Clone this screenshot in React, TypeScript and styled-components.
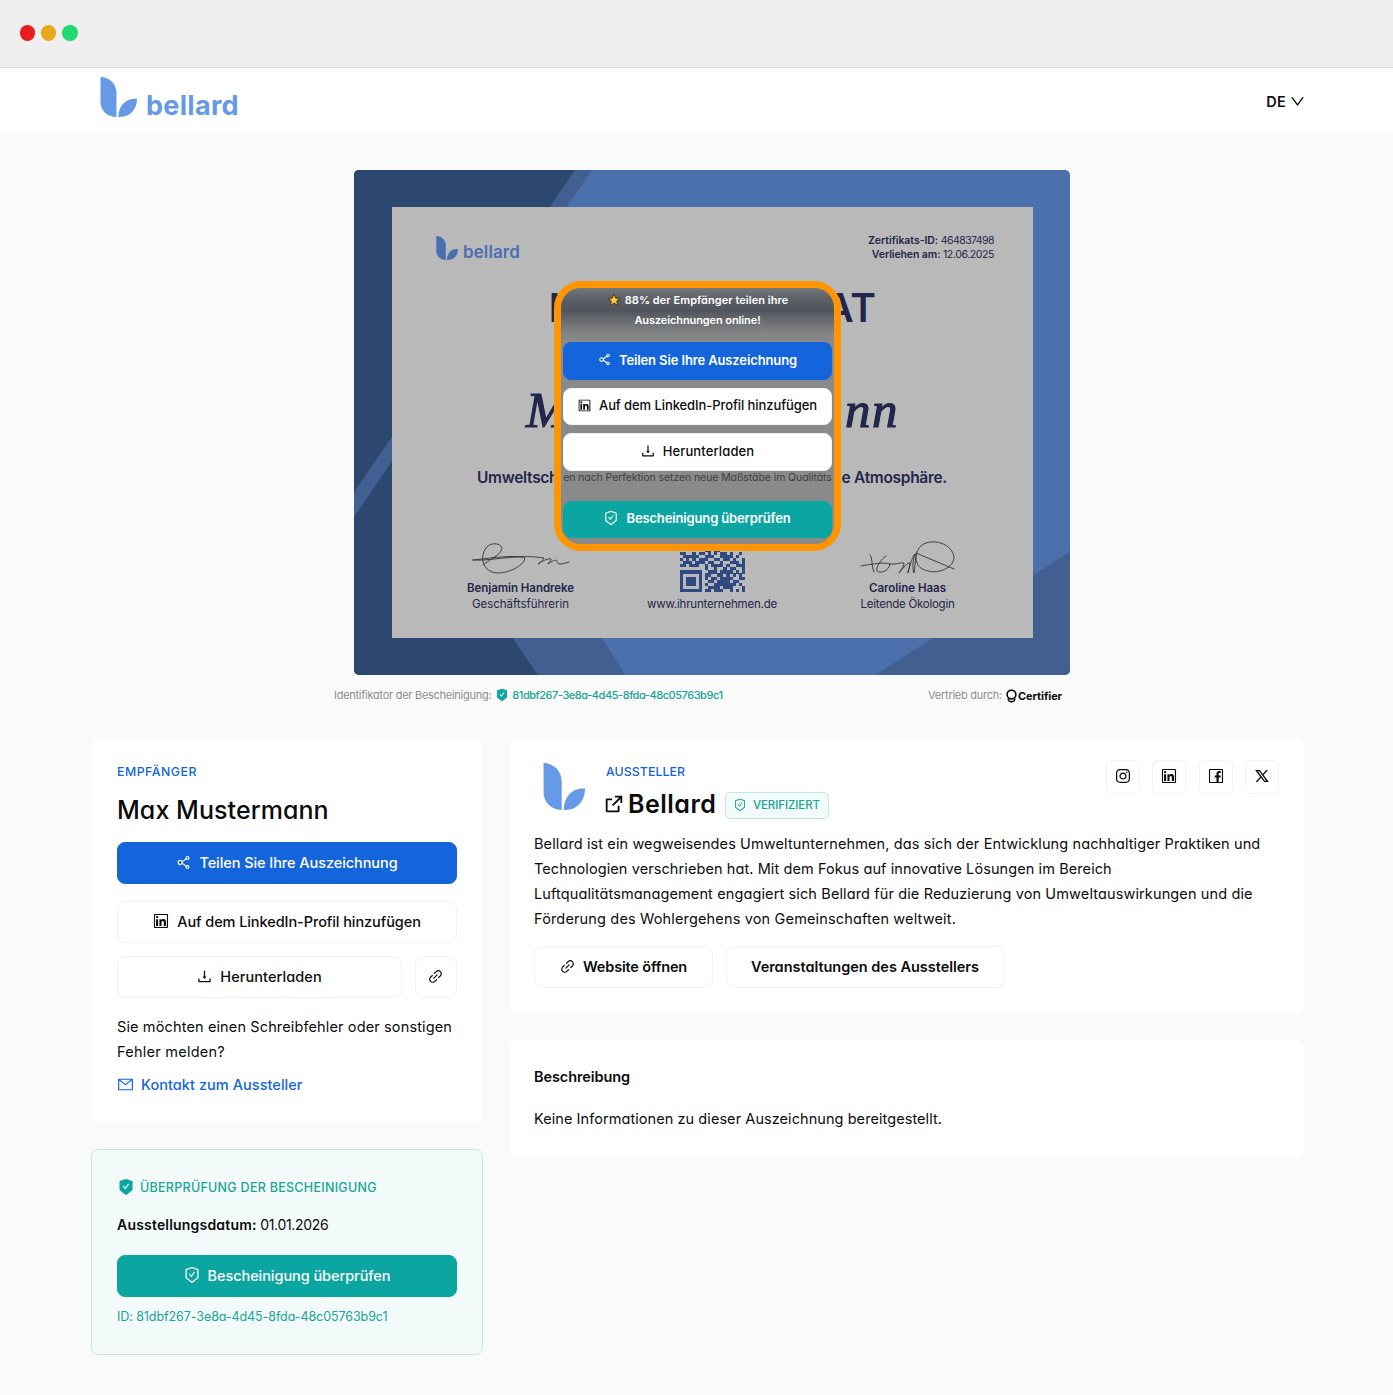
import React from "react";
import styled, { createGlobalStyle, css } from "styled-components";
import {
  AiFillSafetyCertificate,
  AiOutlineDown,
  AiOutlineDownload,
  AiOutlineFacebook,
  AiOutlineInstagram,
  AiOutlineLink,
  AiOutlineLinkedin,
  AiOutlineMail,
  AiOutlineSafetyCertificate,
  AiOutlineShareAlt,
} from "react-icons/ai";
import { RiExternalLinkLine, RiTwitterXLine } from "react-icons/ri";

const BLUE = "#1465dc";
const TEAL = "#0ba5a2";
const TEAL_TEXT = "#18a594";
const LEAF = "#6699e6";
const NAVY = "#23264a";

const GlobalStyle = createGlobalStyle`
  *, *::before, *::after { box-sizing: border-box; }
  body {
    margin: 0;
    background: #fafafa;
    color: #0c0c0d;
    font-family: Inter, "Liberation Sans", sans-serif;
    font-feature-settings: "cv11";
  }
  h1, h2, h3, p { margin: 0; font-weight: inherit; font-size: inherit; }
  svg { display: block; flex: none; }
`;

interface TextProps {
  $size?: number;
  $weight?: number;
  $ls?: number;
  $color?: string;
}

const Text = styled.span<TextProps>`
  font-size: ${(p) => p.$size ?? 14.5}px;
  font-weight: ${(p) => p.$weight ?? 400};
  letter-spacing: ${(p) => p.$ls ?? 0}px;
  color: ${(p) => p.$color ?? "inherit"};
  white-space: nowrap;
`;

/* ---------- window and page header ---------- */

const Page = styled.div`
  height: 1395px;
  overflow: hidden;
`;

const WindowBar = styled.div`
  display: flex;
  align-items: center;
  gap: 5.8px;
  height: 68px;
  padding: 0 0 1px 19.5px;
  background: #efefef;
  border-bottom: 1px solid #dcdcdc;
`;

const Dot = styled.i<{ $color: string }>`
  width: 15.5px;
  height: 15.5px;
  border-radius: 50%;
  background: ${(p) => p.$color};
`;

const Header = styled.header`
  display: flex;
  justify-content: space-between;
  height: 66px;
  padding: 9px 87px 0 100px;
  background: #fff;
`;

const Brand = styled.div<{ $scale?: "small" }>`
  display: flex;
  align-items: flex-start;
  font-feature-settings: normal;
  ${(p) =>
    p.$scale === "small"
      ? css`
          color: #4a6fb0;
          gap: 5px;
          & > span { margin-top: 6px; line-height: 20px; }
        `
      : css`
          color: ${LEAF};
          gap: 9px;
          & > span { margin-top: 13px; line-height: 32px; }
        `}
`;

const Language = styled.button`
  display: flex;
  align-items: center;
  gap: 3px;
  height: 48px;
  padding: 0;
  border: 0;
  background: none;
  font-family: inherit;
  font-feature-settings: inherit;
  color: #111;
`;

/* ---------- certificate ---------- */

const Certificate = styled.section`
  position: relative;
  width: 716px;
  height: 505px;
  margin: 36px 0 0 354px;
  padding: 37px 37px 37px 38px;
  border-radius: 5px;
  overflow: hidden;
  background: #4b70ab;
`;

const Backdrop = styled.svg`
  position: absolute;
  inset: 0;
`;

const Sheet = styled.div`
  position: relative;
  height: 431px;
  background: #b9b9b9;
  color: ${NAVY};
  font-feature-settings: normal;
`;

const SheetTop = styled.div`
  display: flex;
  justify-content: space-between;
  height: 78px;
  padding: 29px 39px 0 44px;
`;

const Facts = styled.div`
  display: flex;
  flex-direction: column;
  align-items: flex-end;
  font-size: 10.5px;
  line-height: 14px;
  margin-top: -2px;
`;

const SplitLine = styled.div<{ $height: number; $left: number; $right: number; $top?: number }>`
  display: flex;
  align-items: center;
  justify-content: space-between;
  height: ${(p) => p.$height}px;
  margin-top: ${(p) => p.$top ?? 0}px;
  padding: 0 ${(p) => p.$right}px 0 ${(p) => p.$left}px;
`;

const Script = styled.span`
  font: italic 51px/60px "Liberation Serif", serif;
  letter-spacing: 1.5px;
  -webkit-text-stroke: 1.2px currentColor;
`;

const Signers = styled.div`
  display: grid;
  grid-template-columns: 257px 126px 265px;
  height: 92px;
  margin-top: 28px;
`;

const Signer = styled.div`
  display: flex;
  flex-direction: column;
  align-items: center;
  justify-content: flex-end;
  line-height: 16px;
  & > svg { margin-bottom: 4px; }
`;

/* ---------- highlighted action menu ---------- */

const Spotlight = styled.div`
  position: absolute;
  left: 200px;
  top: 111px;
  width: 287px;
  height: 270px;
  border: 7.5px solid #ff9503;
  border-radius: 27px;
  background: #8a8a8a;
  overflow: hidden;
`;

const Hint = styled.div`
  display: flex;
  flex-direction: column;
  align-items: center;
  height: 54px;
  padding-top: 1.5px;
  line-height: 20.5px;
  color: #fff;
  background: linear-gradient(#74777b 0, #5b5f66 12px, #50545c 22px, #6b6d71 34px, #828385 44px, #8a8a8a 54px);
`;

const HintLine = styled.div`
  display: flex;
  align-items: center;
  gap: 4px;
`;

const MenuButtons = styled.div`
  display: grid;
  gap: 8px;
  padding: 0 2px;
`;

const FaintLine = styled.div`
  position: relative;
  height: 12px;
  margin: 1px 0 17px;
  display: flex;
  justify-content: center;
  line-height: 12px;
  color: #3d3e43;
  &::after {
    content: "";
    position: absolute;
    inset: auto 0 0;
    height: 3px;
    background: #8a8a8a;
  }
`;

/* ---------- buttons ---------- */

type Tone = "blue" | "teal" | "plain";

const Button = styled.button<{ $tone: Tone; $height?: number; $grow?: boolean; $width?: number; $gap?: number }>`
  display: flex;
  align-items: center;
  justify-content: center;
  gap: ${(p) => p.$gap ?? 7}px;
  height: ${(p) => p.$height ?? 42}px;
  ${(p) => p.$width && `width: ${p.$width}px;`}
  ${(p) => p.$grow && "flex: 1;"}
  padding: 0 1px 2px 0;
  border-radius: 8px;
  border: 1px solid ${(p) => (p.$tone === "plain" ? "#f2f2f2" : p.$tone === "blue" ? BLUE : TEAL)};
  background: ${(p) => (p.$tone === "blue" ? BLUE : p.$tone === "teal" ? TEAL : "#fff")};
  color: ${(p) => (p.$tone === "plain" ? "#0c0c0d" : "#fff")};
  font-family: inherit;
  font-feature-settings: "cv11";
`;

/* ---------- caption row ---------- */

const Caption = styled.div`
  display: flex;
  justify-content: space-between;
  align-items: center;
  height: 20px;
  margin: 10px 331px 0 334px;
  color: #8d8f92;
`;

const Inline = styled.div<{ $gap: number; $top?: number }>`
  display: flex;
  align-items: center;
  gap: ${(p) => p.$gap}px;
  margin-top: ${(p) => p.$top ?? 0}px;
`;

/* ---------- cards ---------- */

const Columns = styled.main`
  display: grid;
  grid-template-columns: 390px 794px;
  column-gap: 28px;
  align-items: start;
  padding: 33px 0 0 92px;
`;

const Stack = styled.div`
  display: grid;
  grid-template-columns: 100%;
  gap: 27px;
`;

const Card = styled.section<{ $height: number; $padding: string }>`
  height: ${(p) => p.$height}px;
  padding: ${(p) => p.$padding};
  background: #fff;
  border-radius: 7px;
`;

const VerifyCard = styled(Card)`
  margin: 0 0 0 -1px;
  width: 392px;
  border: 1px solid #c9e4e0;
  background: #f3fafa;
`;

const Line = styled.div<{ $h: number; $top?: number }>`
  display: flex;
  align-items: center;
  height: ${(p) => p.$h}px;
  margin-top: ${(p) => p.$top ?? 0}px;
`;

const ButtonRow = styled.div<{ $top: number; $gap?: number }>`
  display: flex;
  gap: ${(p) => p.$gap ?? 13}px;
  margin-top: ${(p) => p.$top}px;
`;

const IssuerHead = styled.div`
  display: flex;
  align-items: flex-start;
  height: 68px;
`;

const IssuerLogo = styled.div`
  padding: 1px 0 0 9px;
`;

const IssuerTitle = styled.div`
  flex: 1;
  margin-left: 21px;
`;

const IssuerName = styled(Line)`
  & > svg { margin: 0 3px 0 -3px; }
`;

const Socials = styled.div`
  display: flex;
  gap: 12.4px;
  margin-top: -2px;
`;

const SocialButton = styled.a`
  display: grid;
  place-items: center;
  width: 34px;
  height: 34px;
  padding-bottom: 3px;
  border: 1px solid #f3f3f3;
  border-radius: 6px;
`;

const Badge = styled.span`
  display: flex;
  align-items: center;
  justify-content: center;
  gap: 6px;
  width: 104px;
  height: 27px;
  margin: 3px 0 0 9px;
  padding: 0 2px 1px 0;
  border: 1px solid #c4e7e2;
  border-radius: 5px;
  background: #f3fafa;
  color: ${TEAL_TEXT};
`;

/* ---------- drawings ---------- */

const Leaf = ({ width, height, color = LEAF }: { width: number; height: number; color?: string }) => (
  <svg width={width} height={height} viewBox="0 0 36 40" preserveAspectRatio="none" fill={color}>
    <path d="M0.5 0C9 0 16 7 16 15.500V40C7 40 0.500 33.500 0.500 25Z" />
    <path d="M17.800 40C17.800 29.500 24.500 21.800 34 21.800H36C36 32 29.500 40 19.500 40Z" />
  </svg>
);

const Star = () => (
  <svg width="14" height="14" viewBox="0 0 24 24">
    <path
      d="M12 1.800l3 7h7.500l-6 5 2.200 7.700L12 17.200l-6.700 4.300 2.200-7.700-6-5H9z"
      fill="#ffc83d"
      stroke="#3d3222"
      strokeWidth="1.500"
      strokeLinejoin="round"
    />
  </svg>
);

const Seal = () => (
  <svg width="11" height="14" viewBox="0 0 11 14" fill="none" stroke="#0b0b0b" strokeWidth="1.600">
    <circle cx="5.500" cy="5.500" r="4.400" />
    <path d="M1.800 9.500L3 12L5.500 13L8 12L9.200 9.500" strokeWidth="1.400" />
  </svg>
);

const QR = [
  "111111100101101111111",
  "100000101100101000001",
  "101110100011001011101",
  "101110101101001011101",
  "101110100100101011101",
  "100000101101101000001",
  "111111101010101111111",
  "000000001101100000000",
  "110010110101011010010",
  "011111001110011110100",
  "101010111001101101001",
  "011101110110010011101",
  "110111001011110100111",
  "000000001001001011001",
  "111111100111011110101",
  "100000101100110101010",
  "101110101011011110011",
  "101110100110111101100",
  "101110101001111111010",
  "100000100111101110001",
  "111111101101110010101",
];

const QrCode = () => (
  <svg width="65" height="65" viewBox="0 0 21 21" fill="#2f4a83" shapeRendering="crispEdges">
    {QR.flatMap((row, y) =>
      [...row].map((cell, x) => (cell === "1" ? <rect key={`${x}-${y}`} x={x} y={y} width="1.030" height="1.030" /> : null)),
    )}
  </svg>
);

const SignatureLeft = () => (
  <svg width="98" height="34" viewBox="0 0 98 34" fill="none" stroke="#30323c" strokeWidth="0.900" strokeLinecap="round">
    <path d="M1 18C12 17 36 13 52 15C56 20 40 31 26 31C16 31 9 23 11 13C13 3 20 1 25 2C33 4 30 10 24 14C18 18 12 22 11 23" />
    <path d="M1 18C16 19 30 15 49 15C58 14 64 15 72 16C70 20 66 22 66 22C72 18 77 16 79 17C80 18 75 22 76 22C80 19 84 17 85 19C85 21 86 22 88 22C91 22 94 21 97 20" />
  </svg>
);

const SignatureRight = () => (
  <svg width="96" height="36" viewBox="0 0 96 36" fill="none" stroke="#30323c" strokeWidth="0.900" strokeLinecap="round">
    <path d="M1 26C12 24 24 22 30 24C29 31 20 34 17 31C15 28 22 18 26 16M10 15C13 18 11 26 14 32M30 24C36 25 40 22 44 23C44 27 39 32 39 33C44 27 48 22 50 23C50 27 47 33 48 33C50 25 53 15 55 14C53 20 52 28 54 33C56 22 54 11 62 5C72 -2 92 3 94 17C94 28 78 34 68 31C59 29 55 24 56 13L94 29" />
  </svg>
);

const CertificateBackdrop = () => (
  <Backdrop width="716" height="505" viewBox="0 0 716 505">
    <path d="M0 0H238L0 347Z" fill="#415f90" />
    <path d="M0 0H221L0 322Z" fill="#2d486e" />
    <path d="M0 347L100 200L160 469L184 505H0Z" fill="#2d486e" />
    <path d="M150 455H240L271 505H184Z" fill="#415f90" />
    <path d="M521 505L716 382V505Z" fill="#415f90" />
  </Backdrop>
);

/* ---------- page ---------- */

const ID = "81dbf267-3e8a-4d45-8fda-48c05763b9c1";

const bodyLines: [string, number][] = [
  ["Bellard ist ein wegweisendes Umweltunternehmen, das sich der Entwicklung nachhaltiger Praktiken und", 0.112],
  ["Technologien verschrieben hat. Mit dem Fokus auf innovative Lösungen im Bereich", 0.09],
  ["Luftqualitätsmanagement engagiert sich Bellard für die Reduzierung von Umweltauswirkungen und die", 0.122],
  ["Förderung des Wohlergehens von Gemeinschaften weltweit.", 0.155],
];

const socials = [AiOutlineInstagram, AiOutlineLinkedin, AiOutlineFacebook, RiTwitterXLine];

export default function App() {
  return (
    <Page>
      <GlobalStyle />
      <WindowBar>
        <Dot $color="#e81c1e" />
        <Dot $color="#e7a91b" />
        <Dot $color="#22db70" />
      </WindowBar>
      <Header>
        <Brand>
          <Leaf width={37} height={40} />
          <Text $size={27} $weight={700} $ls={0.3}>bellard</Text>
        </Brand>
        <Language>
          <Text $weight={600} $ls={0.3}>DE</Text>
          <AiOutlineDown size={17} />
        </Language>
      </Header>

      <Certificate>
        <CertificateBackdrop />
        <Sheet>
          <SheetTop>
            <Brand $scale="small">
              <Leaf width={22} height={24} color="#4a6fb0" />
              <Text $size={17} $weight={600} $ls={0.1}>bellard</Text>
            </Brand>
            <Facts>
              <div>
                <Text $size={10.5} $weight={600} $ls={-0.05}>Zertifikats-ID: </Text>
                <Text $size={10.5} $ls={-0.55}>464837498</Text>
              </div>
              <div>
                <Text $size={10.5} $weight={600} $ls={-0.1}>Verliehen am: </Text>
                <Text $size={10.5} $ls={-0.4}>12.06.2025</Text>
              </div>
            </Facts>
          </SheetTop>
          <SplitLine $height={44} $left={157} $right={157}>
            <Text $size={39} $weight={700}>I</Text>
            <Text $size={39} $weight={600}>AT</Text>
          </SplitLine>
          <SplitLine $height={60} $left={134} $right={134} $top={51}>
            <Script>M</Script>
            <Script>nn</Script>
          </SplitLine>
          <SplitLine $height={30} $left={85} $right={86} $top={22}>
            <Text $size={15.5} $weight={600} $ls={-0.3}>Umweltsch</Text>
            <Text $size={15.5} $weight={600} $ls={-0.3}>e Atmosphäre.</Text>
          </SplitLine>
          <Signers>
            <Signer>
              <SignatureLeft />
              <Text $size={11.5} $weight={600} $ls={-0.05}>Benjamin Handreke</Text>
              <Text $size={11.5} $ls={-0.03}>Geschäftsführerin</Text>
            </Signer>
            <Signer>
              <QrCode />
              <Text $size={11.5} $ls={-0.19}>www.ihrunternehmen.de</Text>
            </Signer>
            <Signer>
              <SignatureRight />
              <Text $size={11.5} $weight={600} $ls={-0.02}>Caroline Haas</Text>
              <Text $size={11.5} $ls={-0.25}>Leitende Ökologin</Text>
            </Signer>
          </Signers>
        </Sheet>

        <Spotlight>
          <Hint>
            <HintLine>
              <Star />
              <Text $size={11} $weight={600} $ls={0.04}>88% der Empfänger teilen ihre</Text>
            </HintLine>
            <Text $size={11} $weight={600} $ls={-0.1}>Auszeichnungen online!</Text>
          </Hint>
          <MenuButtons>
            <Button $tone="blue" $height={37.5}>
              <AiOutlineShareAlt size={15} />
              <Text $size={13} $weight={600} $ls={-0.125}>Teilen Sie Ihre Auszeichnung</Text>
            </Button>
            <Button $tone="plain" $height={37.5}>
              <AiOutlineLinkedin size={15} />
              <Text $size={13} $weight={500} $ls={-0.083}>Auf dem LinkedIn-Profil hinzufügen</Text>
            </Button>
            <Button $tone="plain" $height={37.5}>
              <AiOutlineDownload size={16} />
              <Text $size={13} $weight={500} $ls={0.13}>Herunterladen</Text>
            </Button>
          </MenuButtons>
          <FaintLine>
            <Text $size={10.5} $ls={-0.08}>en nach Perfektion setzen neue Maßstäbe im Qualitäts</Text>
          </FaintLine>
          <MenuButtons>
            <Button $tone="teal" $height={37.5}>
              <AiOutlineSafetyCertificate size={16} />
              <Text $size={13} $weight={600} $ls={-0.145}>Bescheinigung überprüfen</Text>
            </Button>
          </MenuButtons>
        </Spotlight>
      </Certificate>

      <Caption>
        <Inline $gap={3.5}>
          <Text $size={11} $ls={-0.27}>Identifikator der Bescheinigung:</Text>
          <AiFillSafetyCertificate size={14} color={TEAL} />
          <Text $size={11} $weight={500} $ls={-0.46} $color={TEAL_TEXT}>{ID}</Text>
        </Inline>
        <Inline $gap={4}>
          <Text $size={11} $ls={-0.25}>Vertrieb durch:</Text>
          <Inline $gap={1} $top={2}>
            <Seal />
            <Text $size={11} $weight={700} $ls={-0.1} $color="#0b0b0b">Certifier</Text>
          </Inline>
        </Inline>
      </Caption>

      <Columns>
        <Stack>
          <Card $height={384} $padding="23px 25px 0 25px">
            <Line $h={20}>
              <Text $size={12.3} $weight={500} $ls={0.52} $color={BLUE}>EMPFÄNGER</Text>
            </Line>
            <Line as="h1" $h={34} $top={12}>
              <Text $size={25} $weight={500} $ls={0.06}>Max Mustermann</Text>
            </Line>
            <ButtonRow $top={15}>
              <Button $tone="blue" $grow>
                <AiOutlineShareAlt size={17} />
                <Text $weight={500} $ls={-0.07}>Teilen Sie Ihre Auszeichnung</Text>
              </Button>
            </ButtonRow>
            <ButtonRow $top={17}>
              <Button $tone="plain" $grow>
                <AiOutlineLinkedin size={18} />
                <Text $weight={500} $ls={-0.08}>Auf dem LinkedIn-Profil hinzufügen</Text>
              </Button>
            </ButtonRow>
            <ButtonRow $top={13}>
              <Button $tone="plain" $grow>
                <AiOutlineDownload size={17} />
                <Text $weight={500} $ls={0.08}>Herunterladen</Text>
              </Button>
              <Button $tone="plain" $width={42}>
                <AiOutlineLink size={17} />
              </Button>
            </ButtonRow>
            <Line $h={25} $top={16}>
              <Text $ls={0.132}>Sie möchten einen Schreibfehler oder sonstigen</Text>
            </Line>
            <Line $h={25}>
              <Text $ls={0.25}>Fehler melden?</Text>
            </Line>
            <Inline $gap={7} $top={12}>
              <AiOutlineMail size={17} color={BLUE} />
              <Text $weight={500} $ls={0.047} $color={BLUE}>Kontakt zum Aussteller</Text>
            </Inline>
          </Card>

          <VerifyCard $height={206} $padding="28px 25px 0 25px">
            <Inline $gap={5}>
              <AiFillSafetyCertificate size={18} color={TEAL} />
              <Text $size={12.5} $weight={500} $ls={0.28} $color={TEAL_TEXT}>ÜBERPRÜFUNG DER BESCHEINIGUNG</Text>
            </Inline>
            <Line $h={20} $top={18}>
              <Text $size={14} $weight={600} $ls={0.19}>Ausstellungsdatum:</Text>
              <Text $size={14} $ls={-0.33}>&nbsp;01.01.2026</Text>
            </Line>
            <ButtonRow $top={21}>
              <Button $tone="teal" $grow>
                <AiOutlineSafetyCertificate size={18} />
                <Text $weight={500} $ls={-0.059}>Bescheinigung überprüfen</Text>
              </Button>
            </ButtonRow>
            <Line $h={20} $top={9}>
              <Text $size={12.5} $ls={-0.08} $color={TEAL_TEXT}>ID: {ID}</Text>
            </Line>
          </VerifyCard>
        </Stack>

        <Stack>
          <Card $height={275} $padding="24px 25px 0 24px">
            <IssuerHead>
              <IssuerLogo>
                <Leaf width={42} height={47} />
              </IssuerLogo>
              <IssuerTitle>
                <Line $h={18}>
                  <Text $size={12.3} $weight={500} $ls={0.08} $color={BLUE}>AUSSTELLER</Text>
                </Line>
                <IssuerName as="h2" $h={32} $top={8}>
                  <RiExternalLinkLine size={22} />
                  <Text $size={25} $weight={600} $ls={0.5}>Bellard</Text>
                  <Badge>
                    <AiOutlineSafetyCertificate size={14} />
                    <Text $size={11.5} $weight={500} $ls={-0.09}>VERIFIZIERT</Text>
                  </Badge>
                </IssuerName>
              </IssuerTitle>
              <Socials>
                {socials.map((Icon, i) => (
                  <SocialButton key={i}>
                    <Icon size={i === 3 ? 16 : 18} />
                  </SocialButton>
                ))}
              </Socials>
            </IssuerHead>
            {bodyLines.map(([line, ls], i) => (
              <Line key={line} $h={25} $top={i ? 0 : 1}>
                <Text $ls={ls}>{line}</Text>
              </Line>
            ))}
            <ButtonRow $top={15}>
              <Button $tone="plain" $width={179}>
                <AiOutlineLink size={17} />
                <Text $weight={600} $ls={-0.17}>Website öffnen</Text>
              </Button>
              <Button $tone="plain" $width={279}>
                <Text $weight={600} $ls={-0.02}>Veranstaltungen des Ausstellers</Text>
              </Button>
            </ButtonRow>
          </Card>
          <Card $height={117} $padding="26px 24px 0">
            <Line as="h3" $h={20}>
              <Text $weight={600} $ls={-0.09}>Beschreibung</Text>
            </Line>
            <Line $h={20} $top={22}>
              <Text $ls={0.065}>Keine Informationen zu dieser Auszeichnung bereitgestellt.</Text>
            </Line>
          </Card>
        </Stack>
      </Columns>
    </Page>
  );
}
